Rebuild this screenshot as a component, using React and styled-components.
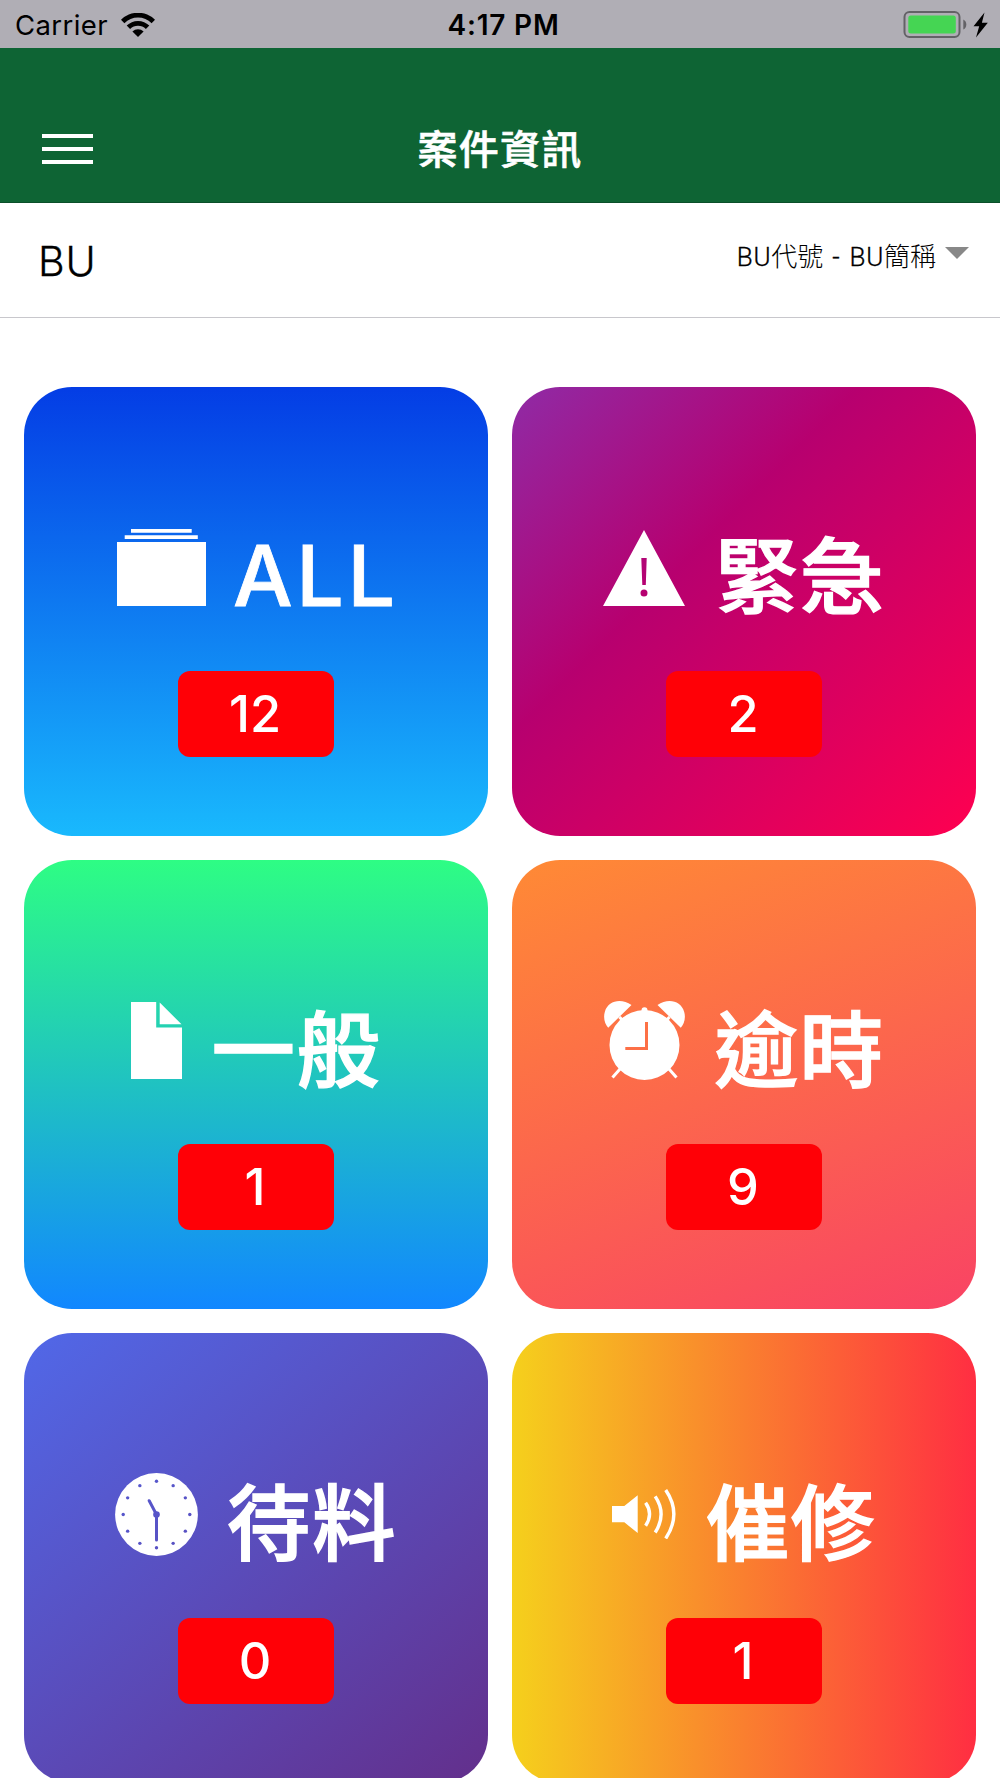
import React from "react";
import styled, { createGlobalStyle } from "styled-components";

const GlobalStyle = createGlobalStyle`
  * { box-sizing: border-box; }
  html, body { margin: 0; height: 1778px; overflow: hidden; background: #fff; }
`;

const sans = `Inter, "Noto Sans CJK TC", sans-serif`;

const Screen = styled.div`
  width: 1000px;
  height: 1778px;
  overflow: hidden;
  background: #fff;
  font-family: ${sans};
`;

const StatusBar = styled.div`
  display: grid;
  grid-template-columns: 1fr auto 1fr;
  align-items: center;
  height: 48px;
  padding: 2px 12px 0 15px;
  background: #b0aeb5;
  color: #000;
  font-size: 28px;
`;

const Carrier = styled.div`
  display: flex;
  align-items: center;
  gap: 13px;
  font-size: 27.5px;
  letter-spacing: 0.4px;
`;

const Time = styled.div`
  font-weight: 600;
  padding-left: 4px;
  letter-spacing: 0.8px;
`;

const Power = styled.div`
  display: flex;
  align-items: center;
  justify-content: flex-end;
`;

const Header = styled.header`
  display: grid;
  grid-template-columns: 1fr auto 1fr;
  align-items: center;
  height: 155px;
  padding: 47px 42px 0;
  background: #0e6434;
  border-bottom: 1px solid #0b4f2a;
  color: #fff;
`;

const MenuButton = styled.button`
  display: flex;
  flex-direction: column;
  gap: 9px;
  width: 51px;
  padding: 0;
  border: 0;
  background: none;
`;

const MenuLine = styled.span`
  height: 4px;
  background: #fff;
`;

const Title = styled.h1`
  margin: 0;
  padding-top: 2px;
  font-size: 40px;
  line-height: 48px;
  font-weight: 500;
  letter-spacing: 1.3px;
  -webkit-text-stroke: 0.6px currentColor;
`;

const Filter = styled.div`
  display: flex;
  justify-content: space-between;
  align-items: flex-start;
  height: 115px;
  padding: 33px 31px 0 38px;
  border-bottom: 1px solid #c8c7cc;
`;

const FilterLabel = styled.label`
  font-size: 41px;
  line-height: 50px;
  font-weight: 350;
  letter-spacing: 0.8px;
  color: #000;
  -webkit-text-stroke: 0.3px currentColor;
`;

const Select = styled.div`
  display: flex;
  align-items: center;
  gap: 9px;
  padding-top: 4px;
  color: #000;
`;

const SelectText = styled.span`
  font-family: Roboto, "Noto Sans CJK TC", sans-serif;
  font-size: 26px;
  line-height: 34px;
  font-weight: 300;
  word-spacing: 2px;
`;

const Latin = styled.span`
  font-weight: 350;
  letter-spacing: 0.7px;
  -webkit-text-stroke: 0.3px currentColor;
`;

const Caret = styled.span`
  border: 12px solid transparent;
  border-top-color: #888;
  border-bottom: 0;
  margin-bottom: 8px;
`;

const Grid = styled.main`
  display: grid;
  grid-template-columns: 464px 464px;
  grid-auto-rows: 449.4px;
  gap: 24px;
  padding: 68.5px 24px 0;
`;

const Tile = styled.section`
  display: flex;
  flex-direction: column;
  align-items: center;
  padding-top: 130.4px;
  border-radius: 48px;
  background: ${(p) => p.$fill};
  color: #fff;
`;

const TileHead = styled.div`
  display: flex;
  align-items: center;
  gap: ${(p) => p.$gap}px;
  height: 101.3px;
`;

const TileName = styled.span`
  margin-right: ${(p) => (p.$latin ? -3.6 : 0)}px;
  padding-top: ${(p) => (p.$latin ? 17 : 19)}px;
  font-size: ${(p) => (p.$latin ? 84.2 : 83.5)}px;
  line-height: 85.3px;
  font-weight: 500;
  letter-spacing: ${(p) => (p.$latin ? 3.6 : 1.5)}px;
  white-space: nowrap;
  -webkit-text-stroke: ${(p) => (p.$latin ? 0.8 : 1.4)}px currentColor;
`;

const Count = styled.div`
  display: flex;
  align-items: center;
  justify-content: center;
  width: 156px;
  height: 86px;
  margin-top: 52.6px;
  padding-right: 2px;
  border-radius: 12px;
  background: #ff0006;
  font-size: 50.5px;
  line-height: 60px;
  font-weight: 500;
`;

const Glyph = styled.svg`
  display: block;
  flex: none;
  fill: currentColor;
`;

const Wifi = () => (
  <Glyph width="34" height="24" viewBox="0 0 34 24">
    <path d="M0 6.8A24 24 0 0 1 34 6.8L30.6 10.2A19.2 19.2 0 0 0 3.4 10.2Z" />
    <path d="M5.7 12.6A16 16 0 0 1 28.3 12.6L24.9 16A11.2 11.2 0 0 0 9.1 16Z" />
    <path d="M11.4 18.5A8 8 0 0 1 22.6 18.5L17 24Z" />
  </Glyph>
);

const Battery = () => (
  <Glyph width="85" height="28" viewBox="0 0 85 28">
    <rect x="1.5" y="1" width="55" height="25" rx="5" fill="none" stroke="#636266" strokeWidth="2" />
    <rect x="5.3" y="4.5" width="47.5" height="18" rx="2.5" fill="#45d553" />
    <path d="M60.3 8.5Q63.3 10 63.3 13.5T60.3 18.5Z" fill="#636266" />
    <path d="M81.5 1.5L70.5 15.2H76.2L73 26.5L84.8 11.8H78.9Z" fill="#000" />
  </Glyph>
);

const Albums = () => (
  <Glyph width="89" height="77" viewBox="0 0 89 77">
    <path d="M14 0H74.7V3.7H14ZM7.7 6.3H80.8V10H7.7ZM0 13H89V77H0Z" />
  </Glyph>
);

const Warning = () => (
  <Glyph width="82" height="76" viewBox="0 0 82 76">
    <path
      fillRule="evenodd"
      d="M41 0L82 76H0ZM38.3 28H43.7L42.8 55H39.3ZM41 59.4A3.5 3.5 0 1 0 41 66.4A3.5 3.5 0 1 0 41 59.4Z"
    />
  </Glyph>
);

const Doc = () => (
  <Glyph width="51" height="77" viewBox="0 0 51 77">
    <path d="M0 0H25.2V25.5H51V77H0ZM28.7 0.5L50.5 22.3H28.7Z" />
  </Glyph>
);

const Alarm = () => (
  <Glyph width="81" height="79" viewBox="0 0 81 79">
    <path d="M27.5 4C17-3 4-0.5 0.8 11C-1 17 1 23 4.2 26.8Z" />
    <path d="M53.5 4C64-3 77-0.5 80.2 11C82 17 80 23 76.8 26.8Z" />
    <path
      fillRule="evenodd"
      d="M40.5 9A35 35 0 1 0 40.5 79A35 35 0 1 0 40.5 9ZM41 21H44V49H21.3V46H41Z"
    />
    <circle cx="40.5" cy="9.2" r="3" />
    <path
      d="M15.5 16L20 21M65.5 16L61 21M16 68L8.5 76.5M65 68L72.5 76.5"
      fill="none"
      stroke="currentColor"
      strokeWidth="3"
    />
  </Glyph>
);

const Clock = () => {
  const ticks = Array.from({ length: 12 }, (_, i) => (i * Math.PI) / 6);
  return (
    <Glyph width="83" height="83" viewBox="0 0 83 83">
      <mask id="clock-face">
        <rect width="83" height="83" fill="#fff" />
        {ticks.map((a) => (
          <circle
            key={a}
            cx={41.5 + 33.3 * Math.sin(a)}
            cy={41.5 - 33.3 * Math.cos(a)}
            r="1.7"
            fill="#000"
          />
        ))}
        <circle cx="41.5" cy="41.5" r="3.3" fill="#000" />
        <path
          d="M34.2 27.7L41.5 41.5V67"
          fill="none"
          stroke="#000"
          strokeWidth="3"
          strokeLinecap="round"
        />
      </mask>
      <circle cx="41.5" cy="41.5" r="41.4" mask="url(#clock-face)" />
    </Glyph>
  );
};

const Volume = () => (
  <Glyph width="64" height="50" viewBox="0 0 64 50">
    <path d="M0 17H12.3L25.7 6.3V44L12.3 33.3H0Z" />
    <path
      d="M33.6 13.8Q41.5 25 33.6 36.7M43.2 7.4Q55 25 43.2 43.5M53.7 1Q70 25 53.7 49.5"
      fill="none"
      stroke="currentColor"
      strokeWidth="3.4"
    />
  </Glyph>
);

const tiles = [
  { name: "ALL", count: 12, icon: Albums, gap: 27, latin: true, fill: "linear-gradient(180deg, #043de5, #19b9fd)" },
  { name: "緊急", count: 2, icon: Warning, gap: 30, fill: "linear-gradient(135deg, #8f2ba6, #b7006f 38%, #ff0050)" },
  { name: "一般", count: 1, icon: Doc, gap: 30, fill: "linear-gradient(180deg, #2efd84, #1187ff)" },
  { name: "逾時", count: 9, icon: Alarm, gap: 30, fill: "linear-gradient(160deg, #ff8a35, #f94364)" },
  { name: "待料", count: 0, icon: Clock, gap: 29, fill: "linear-gradient(140deg, #5168e8, #632f8b)" },
  { name: "催修", count: 1, icon: Volume, gap: 29.5, fill: "linear-gradient(90deg, #f5d01c, #ff2e42)" },
];

export default function App() {
  return (
    <Screen>
      <GlobalStyle />
      <StatusBar>
        <Carrier>
          Carrier
          <Wifi />
        </Carrier>
        <Time>4:17 PM</Time>
        <Power>
          <Battery />
        </Power>
      </StatusBar>
      <Header>
        <MenuButton aria-label="選單">
          <MenuLine />
          <MenuLine />
          <MenuLine />
        </MenuButton>
        <Title>案件資訊</Title>
      </Header>
      <Filter>
        <FilterLabel>BU</FilterLabel>
        <Select>
          <SelectText>
            <Latin>BU</Latin>代號<Latin> - BU</Latin>簡稱
          </SelectText>
          <Caret />
        </Select>
      </Filter>
      <Grid>
        {tiles.map(({ name, count, icon: Icon, gap, latin, fill }) => (
          <Tile key={name} $fill={fill}>
            <TileHead $gap={gap}>
              <Icon />
              <TileName $latin={latin}>{name}</TileName>
            </TileHead>
            <Count>{count}</Count>
          </Tile>
        ))}
      </Grid>
    </Screen>
  );
}
